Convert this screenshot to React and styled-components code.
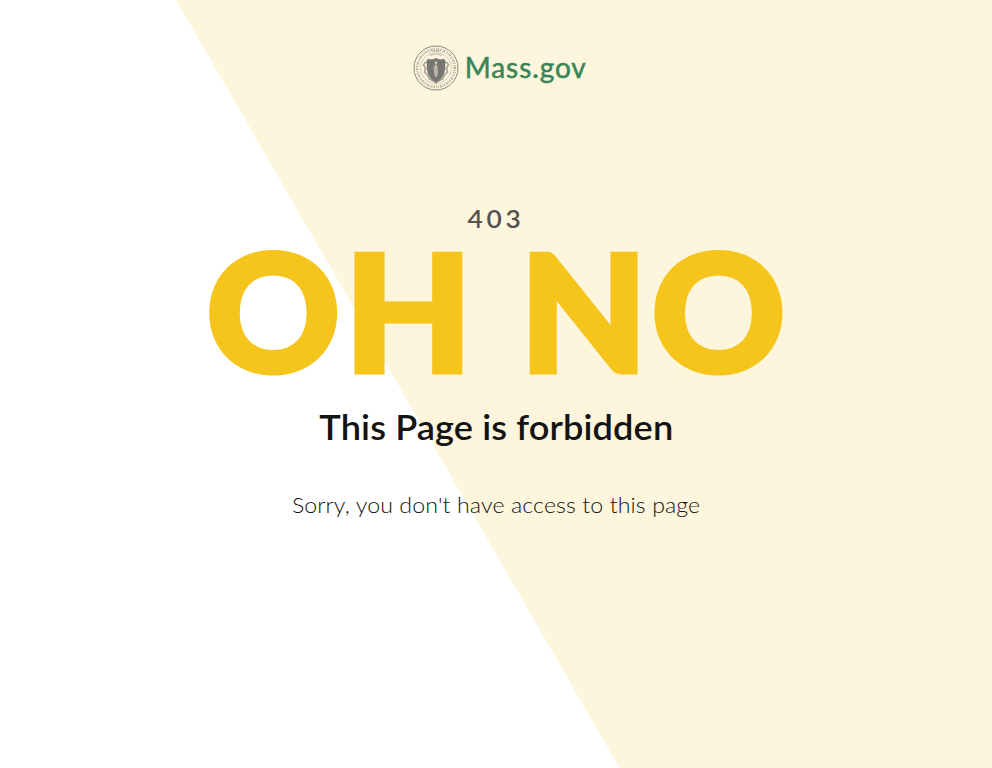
import React from "react";
import styled, { createGlobalStyle } from "styled-components";

const GlobalStyle = createGlobalStyle`
  * { box-sizing: border-box; }
  body { margin: 0; font-family: Lato, "Open Sans", sans-serif; overflow: hidden; }
`;

const Page = styled.div`
  display: flex;
  flex-direction: column;
  align-items: center;
  height: 100vh;
  min-height: 768px;
  background: linear-gradient(60deg, #fff 536.3px, #fef5dd 536.9px);
`;

const Header = styled.header`
  display: flex;
  align-items: center;
  gap: 5.5px;
  height: 46px;
  margin-top: 44.500px;
  padding-left: 8px;
`;

const SiteName = styled.span`
  color: #388557;
  font-size: 28px;
  font-weight: 400;
  line-height: 44px;
  height: 46px;
  letter-spacing: 0.9px;
  white-space: nowrap;
  -webkit-text-stroke: 0.5px #388557;
`;

const SealArt = styled.svg`
  width: 46px;
  height: 46px;
  flex: none;
`;

const Code = styled.div`
  margin-top: 110.500px;
  height: 36px;
  line-height: 36px;
  color: #535353;
  font-size: 24px;
  font-weight: 600;
  letter-spacing: 3.4px;
  transform: scaleX(1.1);
`;

const Shout = styled.div`
  height: 138px;
  margin-top: 4px;
  padding-left: 4px;
  line-height: 138px;
  color: #f5c51c;
  font-size: 162px;
  font-weight: 900;
  letter-spacing: 4px;
  transform: scaleX(1.02);
  white-space: nowrap;
  -webkit-text-stroke: 5px #f5c51c;
`;

const Title = styled.h1`
  margin: 0;
  height: 48px;
  margin-top: 24px;
  line-height: 48px;
  color: #141414;
  font-size: 34px;
  font-weight: 600;
  letter-spacing: 0.1px;
  transform: scaleX(1.064);
  white-space: nowrap;
`;

const Message = styled.p`
  margin: 38px 0 0;
  line-height: 32px;
  color: #141414;
  font-size: 22px;
  font-weight: 300;
  letter-spacing: 0.1px;
  transform: scaleX(1.052);
  white-space: nowrap;
`;

function Seal() {
  return (
    <SealArt viewBox="0 0 46 46" fill="none" stroke="#8b8880" aria-label="Massachusetts seal">
      <circle cx="23" cy="23" r="22" strokeWidth="1" />
      <circle cx="23" cy="23" r="18.8" stroke="#b5b0a3" strokeWidth="2.8" strokeDasharray="1.1 1.1 .7 .9 1.5 1.3" />
      <circle cx="23" cy="23" r="15.5" strokeWidth=".6" stroke="#b5b0a3" />
      <path d="M17 10.5q6-3 12 0M18.500 5.800h9" strokeWidth="1.2" stroke="#b5b0a3" />
      <path d="M12.500 17l-2 3 2 3-1 4 3 3 2 4 4 2M33.500 17l2 3-2 3 1 4-3 3-2 4-4 2" strokeWidth="1.5" stroke="#a39f95" />
      <path d="M15 14q4 1.600 8-.7 4 2.300 8 .7l1.700 3-.7 1.800q1.500 12-9 19.500-10.500-7.500-9-19.500l-.7-1.800z" fill="#777672" stroke="#777672" strokeWidth=".5" />
      <path d="M23 18v13M21 21v4" stroke="#b8b3a5" strokeWidth="1.100" />
      <path d="M22 20h2.200l.8 7-1 5h-2l-1-5z" fill="#bbb6a7" stroke="none" />
      <circle cx="23" cy="17.700" r="1.300" fill="#d4cdbb" stroke="none" />
    </SealArt>
  );
}

export default function App() {
  return (
    <>
      <GlobalStyle />
      <Page>
        <Header>
          <Seal />
          <SiteName>Mass.gov</SiteName>
        </Header>
        <Code>403</Code>
        <Shout>OH NO</Shout>
        <Title>This Page is forbidden</Title>
        <Message>Sorry, you don't have access to this page</Message>
      </Page>
    </>
  );
}
